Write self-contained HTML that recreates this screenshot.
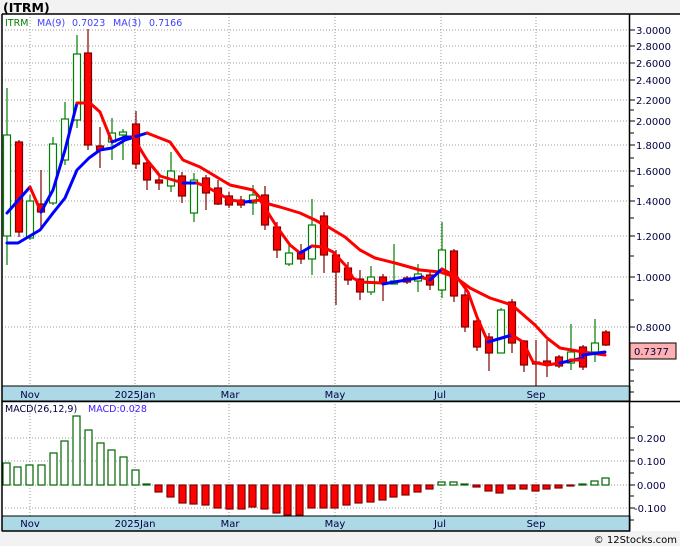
<!DOCTYPE html>
<html><head><meta charset="utf-8"><style>
html,body{margin:0;padding:0;background:#f0f0f0;}
svg{display:block;font-family:"DejaVu Sans","Liberation Sans",sans-serif;}
</style></head><body>
<svg width="680" height="546" viewBox="0 0 680 546" xmlns="http://www.w3.org/2000/svg">
<rect x="0" y="0" width="680" height="546" fill="#f2f2f2"/>
<text x="3" y="12" font-size="12.5" font-weight="bold" fill="#000">(ITRM)</text>
<rect x="2" y="14" width="628" height="517" fill="#fff"/>
<rect x="630" y="14" width="50" height="517" fill="#fff"/>
<g stroke="#999" stroke-dasharray="1,2" stroke-width="1">
<line x1="2" x2="630" y1="30" y2="30"/><line x1="2" x2="630" y1="46" y2="46"/><line x1="2" x2="630" y1="63" y2="63"/><line x1="2" x2="630" y1="80" y2="80"/><line x1="2" x2="630" y1="100" y2="100"/><line x1="2" x2="630" y1="121" y2="121"/><line x1="2" x2="630" y1="145" y2="145"/><line x1="2" x2="630" y1="171" y2="171"/><line x1="2" x2="630" y1="201" y2="201"/><line x1="2" x2="630" y1="236" y2="236"/><line x1="2" x2="630" y1="277" y2="277"/><line x1="2" x2="630" y1="327" y2="327"/>
<line x1="2" x2="630" y1="438" y2="438"/><line x1="2" x2="630" y1="461" y2="461"/><line x1="2" x2="630" y1="485" y2="485"/><line x1="2" x2="630" y1="508" y2="508"/>
<line x1="30" x2="30" y1="14" y2="531"/><line x1="135" x2="135" y1="14" y2="531"/><line x1="229" x2="229" y1="14" y2="531"/><line x1="335" x2="335" y1="14" y2="531"/><line x1="441" x2="441" y1="14" y2="531"/><line x1="536" x2="536" y1="14" y2="531"/>
</g>
<g stroke-width="1.2">
<g stroke="#008000" fill="#fff">
<line x1="7" x2="7" y1="88" y2="265"/><rect x="3.5" y="135" width="7" height="101"/>
<line x1="30" x2="30" y1="195" y2="240"/><rect x="26.5" y="201" width="7" height="37"/>
<line x1="53" x2="53" y1="137" y2="205"/><rect x="49.5" y="144" width="7" height="59"/>
<line x1="65" x2="65" y1="102" y2="165"/><rect x="61.5" y="119" width="7" height="41"/>
<line x1="77" x2="77" y1="35" y2="128"/><rect x="73.5" y="54" width="7" height="66"/>
<line x1="112" x2="112" y1="118" y2="160"/><rect x="108.5" y="133" width="7" height="9"/>
<line x1="123" x2="123" y1="129" y2="160"/><rect x="119.5" y="132" width="7" height="3"/>
<line x1="171" x2="171" y1="152" y2="192"/><rect x="167.5" y="171" width="7" height="15"/>
<line x1="194" x2="194" y1="173" y2="222"/><rect x="190.5" y="180" width="7" height="33"/>
<line x1="253" x2="253" y1="185" y2="215"/><rect x="249.5" y="195" width="7" height="8"/>
<line x1="289" x2="289" y1="245" y2="266"/><rect x="285.5" y="253" width="7" height="11"/>
<line x1="312" x2="312" y1="199" y2="275"/><rect x="308.5" y="225" width="7" height="34"/>
<line x1="371" x2="371" y1="266" y2="295"/><rect x="367.5" y="277" width="7" height="15"/>
<line x1="394" x2="394" y1="244" y2="284"/><rect x="390.5" y="281" width="7" height="3"/>
<line x1="418" x2="418" y1="264" y2="292"/><rect x="414.5" y="274" width="7" height="7"/>
<line x1="442" x2="442" y1="222" y2="298"/><rect x="438.5" y="250" width="7" height="40"/>
<line x1="501" x2="501" y1="308" y2="353"/><rect x="497.5" y="310" width="7" height="43"/>
<line x1="571" x2="571" y1="324" y2="370"/><rect x="567.5" y="352" width="7" height="11"/>
<line x1="595" x2="595" y1="319" y2="362"/><rect x="591.5" y="343" width="7" height="9"/>
</g>
<g stroke="#800000" fill="#f00">
<line x1="19" x2="19" y1="140" y2="237"/><rect x="15.5" y="142" width="7" height="90"/>
<line x1="41" x2="41" y1="170" y2="227"/><rect x="37.5" y="204" width="7" height="8"/>
<line x1="88" x2="88" y1="29" y2="150"/><rect x="84.5" y="53" width="7" height="92"/>
<line x1="100" x2="100" y1="127" y2="168"/><rect x="96.5" y="146" width="7" height="4"/>
<line x1="136" x2="136" y1="111" y2="169"/><rect x="132.5" y="124" width="7" height="40"/>
<line x1="147" x2="147" y1="160" y2="190"/><rect x="143.5" y="163" width="7" height="17"/>
<line x1="159" x2="159" y1="175" y2="190"/><rect x="155.5" y="180" width="7" height="3"/>
<line x1="182" x2="182" y1="172" y2="203"/><rect x="178.5" y="176" width="7" height="20"/>
<line x1="206" x2="206" y1="175" y2="210"/><rect x="202.5" y="178" width="7" height="15"/>
<line x1="218" x2="218" y1="180" y2="205"/><rect x="214.5" y="188" width="7" height="16"/>
<line x1="229" x2="229" y1="192" y2="208"/><rect x="225.5" y="196" width="7" height="9"/>
<line x1="241" x2="241" y1="196" y2="208"/><rect x="237.5" y="200" width="7" height="5"/>
<line x1="265" x2="265" y1="186" y2="230"/><rect x="261.5" y="195" width="7" height="30"/>
<line x1="277" x2="277" y1="222" y2="258"/><rect x="273.5" y="227" width="7" height="23"/>
<line x1="301" x2="301" y1="244" y2="264"/><rect x="297.5" y="252" width="7" height="7"/>
<line x1="324" x2="324" y1="212" y2="273"/><rect x="320.5" y="216" width="7" height="39"/>
<line x1="336" x2="336" y1="250" y2="305"/><rect x="332.5" y="255" width="7" height="17"/>
<line x1="348" x2="348" y1="262" y2="285"/><rect x="344.5" y="268" width="7" height="12"/>
<line x1="360" x2="360" y1="270" y2="300"/><rect x="356.5" y="279" width="7" height="13"/>
<line x1="383" x2="383" y1="274" y2="301"/><rect x="379.5" y="277" width="7" height="6"/>
<line x1="407" x2="407" y1="276" y2="284"/><rect x="403.5" y="278" width="7" height="4"/>
<line x1="430" x2="430" y1="270" y2="290"/><rect x="426.5" y="275" width="7" height="10"/>
<line x1="454" x2="454" y1="249" y2="302"/><rect x="450.5" y="251" width="7" height="45"/>
<line x1="465" x2="465" y1="290" y2="332"/><rect x="461.5" y="295" width="7" height="32"/>
<line x1="477" x2="477" y1="316" y2="351"/><rect x="473.5" y="321" width="7" height="26"/>
<line x1="489" x2="489" y1="333" y2="371"/><rect x="485.5" y="337" width="7" height="16"/>
<line x1="512" x2="512" y1="299" y2="353"/><rect x="508.5" y="302" width="7" height="41"/>
<line x1="524" x2="524" y1="340" y2="372"/><rect x="520.5" y="341" width="7" height="24"/>
<line x1="536" x2="536" y1="340" y2="387"/><rect x="532.5" y="362" width="7" height="2"/>
<line x1="547" x2="547" y1="340" y2="377"/><rect x="543.5" y="361" width="7" height="4"/>
<line x1="559" x2="559" y1="355" y2="368"/><rect x="555.5" y="357" width="7" height="9"/>
<line x1="583" x2="583" y1="345" y2="370"/><rect x="579.5" y="347" width="7" height="20"/>
<line x1="606" x2="606" y1="330" y2="346"/><rect x="602.5" y="332" width="7" height="13"/>
</g>
</g>
<g fill="none" stroke-width="3" stroke-linejoin="round" stroke-linecap="round">
<polyline stroke="#0000ff" points="7,243 18,243 40,230 53,213 65,198 77,170 89,158 100,150 112,148 125,140 147,133"/>
<polyline stroke="#ff0000" points="147,133 170,142 183,160 200,167 230,185 253,190 265,203 280,207 300,213 315,220 330,228 345,237 360,250 375,258 395,263 420,270 440,272 455,277 470,288 490,298 512,305 535,325 547,338 560,348 583,352 605,355"/>
<polyline stroke="#0000ff" points="7,213 30,187"/>
<polyline stroke="#ff0000" points="30,187 41,212"/>
<polyline stroke="#0000ff" points="41,212 53,190 65,150 77,103"/>
<polyline stroke="#ff0000" points="77,103 90,103 100,112 112,142"/>
<polyline stroke="#0000ff" points="112,142 125,137 133,137"/>
<polyline stroke="#ff0000" points="133,137 147,160 160,176 183,183"/>
<polyline stroke="#0000ff" points="183,183 197,183"/>
<polyline stroke="#ff0000" points="197,183 207,187 230,200 245,202"/>
<polyline stroke="#0000ff" points="245,202 253,201"/>
<polyline stroke="#ff0000" points="253,201 260,200 265,208 277,227 290,245 300,253"/>
<polyline stroke="#0000ff" points="300,253 312,246"/>
<polyline stroke="#ff0000" points="312,246 323,247 333,252 347,267 353,278 360,282 383,283"/>
<polyline stroke="#0000ff" points="383,284 423,277"/>
<polyline stroke="#ff0000" points="423,278 432,280"/>
<polyline stroke="#0000ff" points="430,280 442,269"/>
<polyline stroke="#ff0000" points="442,269 457,277 468,292 477,317 488,342"/>
<polyline stroke="#0000ff" points="488,342 512,335"/>
<polyline stroke="#ff0000" points="512,335 523,342 533,362 547,365 560,363"/>
<polyline stroke="#0000ff" points="560,363 583,358"/>
<polyline stroke="#ff0000" points="570,360 583,360"/>
<polyline stroke="#0000ff" points="583,355 605,352"/>
</g>
<g stroke-width="1.2">
<g stroke="#006400" fill="#fff">
<rect x="3" y="463" width="7" height="22"/><rect x="14" y="467" width="7" height="18"/><rect x="26" y="465" width="7" height="20"/><rect x="38" y="465" width="7" height="20"/><rect x="50" y="453" width="7" height="32"/><rect x="61" y="441" width="7" height="44"/><rect x="73" y="416" width="7" height="69"/><rect x="85" y="430" width="7" height="55"/><rect x="97" y="443" width="7" height="42"/><rect x="108" y="450" width="7" height="35"/><rect x="120" y="457" width="7" height="28"/><rect x="132" y="470" width="7" height="15"/><rect x="143" y="484" width="7" height="1"/>
<rect x="438" y="482" width="7" height="3"/><rect x="450" y="482" width="7" height="3"/><rect x="461" y="484" width="7" height="1"/><rect x="579" y="484" width="7" height="1"/><rect x="591" y="481" width="7" height="4"/><rect x="602" y="478" width="7" height="7"/>
</g>
<g stroke="#800000" fill="#f00">
<rect x="155" y="485" width="7" height="7"/><rect x="167" y="485" width="7" height="12"/><rect x="179" y="485" width="7" height="18"/><rect x="190" y="485" width="7" height="19"/><rect x="202" y="485" width="7" height="20"/><rect x="214" y="485" width="7" height="23"/><rect x="226" y="485" width="7" height="24"/><rect x="238" y="485" width="7" height="24"/><rect x="249" y="485" width="7" height="22"/><rect x="261" y="485" width="7" height="24"/><rect x="273" y="485" width="7" height="28"/><rect x="284" y="485" width="7" height="30"/><rect x="296" y="485" width="7" height="30"/><rect x="308" y="485" width="7" height="23"/><rect x="320" y="485" width="7" height="23"/><rect x="331" y="485" width="7" height="23"/><rect x="343" y="485" width="7" height="20"/><rect x="355" y="485" width="7" height="18"/><rect x="367" y="485" width="7" height="17"/><rect x="379" y="485" width="7" height="15"/><rect x="390" y="485" width="7" height="12"/><rect x="402" y="485" width="7" height="10"/><rect x="414" y="485" width="7" height="7"/><rect x="426" y="485" width="7" height="4"/>
<rect x="473" y="485" width="7" height="2"/><rect x="485" y="485" width="7" height="6"/><rect x="496" y="485" width="7" height="8"/><rect x="508" y="485" width="7" height="4"/><rect x="520" y="485" width="7" height="4"/><rect x="532" y="485" width="7" height="6"/><rect x="543" y="485" width="7" height="4"/><rect x="555" y="485" width="7" height="3"/><rect x="567" y="485" width="7" height="1"/>
</g>
</g>
<rect x="2" y="386" width="628" height="15" fill="#add8e6" stroke="#000" stroke-width="1"/>
<rect x="2" y="516" width="628" height="15" fill="#add8e6" stroke="#000" stroke-width="1"/>
<g font-size="10" fill="#000040" text-anchor="middle">
<text x="30" y="398">Nov</text><text x="135" y="398">2025Jan</text><text x="230" y="398">Mar</text><text x="335" y="398">May</text><text x="440" y="398">Jul</text><text x="536" y="398">Sep</text>
<text x="30" y="527">Nov</text><text x="135" y="527">2025Jan</text><text x="230" y="527">Mar</text><text x="335" y="527">May</text><text x="440" y="527">Jul</text><text x="536" y="527">Sep</text>
</g>
<g stroke="#000" stroke-width="1.5" fill="none">
<line x1="2" y1="14" x2="680" y2="14"/>
<line x1="2" y1="14" x2="2" y2="531"/>
<line x1="629.5" y1="14" x2="629.5" y2="531"/>
<line x1="2" y1="401.5" x2="680" y2="401.5"/>
<line x1="2" y1="531" x2="630" y2="531"/>
</g>
<g stroke="#000" stroke-width="1">
<line x1="630" x2="635" y1="30" y2="30"/><line x1="630" x2="635" y1="46" y2="46"/><line x1="630" x2="635" y1="63" y2="63"/><line x1="630" x2="635" y1="80" y2="80"/><line x1="630" x2="635" y1="100" y2="100"/><line x1="630" x2="634" y1="110" y2="110"/><line x1="630" x2="635" y1="121" y2="121"/><line x1="630" x2="634" y1="133" y2="133"/><line x1="630" x2="635" y1="145" y2="145"/><line x1="630" x2="634" y1="158" y2="158"/><line x1="630" x2="635" y1="171" y2="171"/><line x1="630" x2="634" y1="186" y2="186"/><line x1="630" x2="635" y1="201" y2="201"/><line x1="630" x2="634" y1="218" y2="218"/><line x1="630" x2="635" y1="236" y2="236"/><line x1="630" x2="634" y1="256" y2="256"/><line x1="630" x2="635" y1="277" y2="277"/><line x1="630" x2="634" y1="300" y2="300"/><line x1="630" x2="635" y1="327" y2="327"/><line x1="630" x2="634" y1="357" y2="357"/><line x1="630" x2="634" y1="370" y2="370"/><line x1="630" x2="634" y1="381" y2="381"/><line x1="630" x2="634" y1="392" y2="392"/>
<line x1="630" x2="634" y1="427" y2="427"/><line x1="630" x2="635" y1="438" y2="438"/><line x1="630" x2="634" y1="450" y2="450"/><line x1="630" x2="635" y1="461" y2="461"/><line x1="630" x2="634" y1="473" y2="473"/><line x1="630" x2="635" y1="485" y2="485"/><line x1="630" x2="634" y1="496" y2="496"/><line x1="630" x2="635" y1="508" y2="508"/><line x1="630" x2="634" y1="520" y2="520"/>
</g>
<g font-size="10" fill="#000040">
<text x="636" y="34">3.0000</text><text x="636" y="50">2.8000</text><text x="636" y="67">2.6000</text><text x="636" y="84">2.4000</text><text x="636" y="104">2.2000</text><text x="636" y="125">2.0000</text><text x="636" y="149">1.8000</text><text x="636" y="175">1.6000</text><text x="636" y="205">1.4000</text><text x="636" y="240">1.2000</text><text x="636" y="281">1.0000</text><text x="636" y="331">0.8000</text>
<text x="637" y="442">0.200</text><text x="637" y="465">0.100</text><text x="637" y="489">0.000</text><text x="634" y="512">-0.100</text>
</g>
<rect x="630" y="343" width="46" height="16" fill="#ffb0b0" stroke="#000" stroke-width="1"/>
<text x="634" y="355" font-size="10" fill="#000040">0.7377</text>
<g font-size="9.5">
<text x="5" y="26" fill="#008000">ITRM</text>
<text x="37" y="26" fill="#4040ff">MA(9)</text>
<text x="72" y="26" fill="#4040ff">0.7023</text>
<text x="113" y="26" fill="#4040ff">MA(3)</text>
<text x="149" y="26" fill="#4040ff">0.7166</text>
<text x="5" y="412" fill="#000040">MACD(26,12,9)</text>
<text x="88" y="412" fill="#4020ff">MACD:0.028</text>
</g>
<text x="677" y="543" font-size="10" fill="#000" text-anchor="end">© 12Stocks.com</text>
</svg>
</body></html>
